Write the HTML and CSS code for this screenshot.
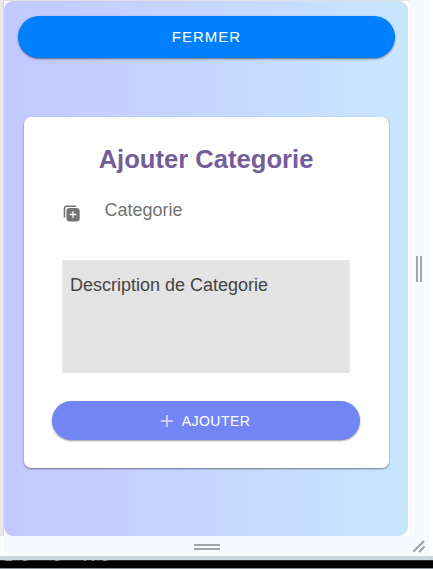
FILE: index.html
```
<!DOCTYPE html>
<html lang="fr">
<head>
<meta charset="utf-8">
<title>Ajouter Categorie</title>
<link rel="stylesheet" href="styles.css">
</head>
<body>
<div class="workspace">
  <div class="gutter"></div>
  <div class="viewport">
    <main class="page">
      <button class="button close">FERMER</button>
      <form class="card">
        <h1>Ajouter Categorie</h1>
        <div class="field">
          <svg class="field-icon" viewBox="0 0 17 17" width="17" height="17">
            <path d="M1.500 12.500V3.500Q1.500 1.300 3.700 1.300H13" fill="none" stroke="#737373" stroke-width="1.600"/>
            <rect x="3.500" y="3" width="13.200" height="13.500" rx="3" fill="#737373"/>
            <path d="M10 6.300v6.400M6.800 9.500h6.400" stroke="#fff" stroke-width="1.300"/>
          </svg>
          <span class="field-label">Categorie</span>
        </div>
        <div class="description">Description de Categorie</div>
        <button class="button add" type="button">
          <svg viewBox="0 0 12 12" width="12" height="12"><path d="M6 0v12M0 6h12" stroke="#dce0ff" stroke-width="1.600"/></svg>
          <span>AJOUTER</span>
        </button>
      </form>
    </main>
  </div>
  <div class="side-handle"><span class="grip vertical"></span></div>
  <div class="edge"></div>
  <div class="bottom-handle">
    <span class="grip horizontal"></span>
    <svg class="corner" viewBox="0 0 14 14" width="14" height="14"><path d="M1.500 11.500L12 1M7 12L12.500 6.500" stroke="#a0a0a0" stroke-width="2"/></svg>
  </div>
  <div class="divider"></div>
  <div class="console">
    <svg viewBox="0 0 120 1" width="120" height="1"><path d="M5 .5h7M23 .5h4M55 .5h4M84 .5h2M92 .5h2M103 .5h4" stroke="#8f9499"/></svg>
  </div>
</div>
</body>
</html>
```
FILE: styles.css
```
* { box-sizing: border-box; }
body {
  margin: 0;
  background: #fff;
  font-family: "Liberation Sans", Arial, sans-serif;
  overflow: hidden;
}
.workspace {
  display: grid;
  width: 433px;
  height: 569px;
  grid-template-columns: 4px 405px 20px 4px;
  grid-template-rows: 536px 20px 4px 9px;
  background: #f6f9fe;
}
.gutter {
  background: #e9e9e9;
  border-right: 1px solid #d9d9d9;
}
.viewport {
  background: #fff;
  border-top: 1px solid #e0e0e0;
}
.page {
  width: 404px;
  height: 534.500px;
  padding: 15px 13px 0 13.500px;
  border-radius: 9px;
  background: linear-gradient(90deg, #c2c8ff, #c9e6ff);
}
.button {
  display: flex;
  align-items: center;
  justify-content: center;
  border: 0;
  padding: 0;
  color: #fff;
  font-family: inherit;
}
.close {
  width: 377px;
  height: 42px;
  padding: 0 0 2px 1px;
  border-radius: 21px;
  background: #0080ff;
  font-size: 15px;
  letter-spacing: 1px;
  box-shadow: 0 1px 2px rgba(0, 0, 0, .5);
}
.card {
  width: 365px;
  height: 351px;
  margin: 59.300px 0 0 6px;
  padding: 24.700px 28px 0;
  border-radius: 7px;
  background: #fff;
  box-shadow: 0 1px 2px rgba(0, 0, 0, .45);
}
h1 {
  margin: 0;
  height: 34px;
  line-height: 34px;
  text-align: center;
  color: #755d99;
  font-size: 25.600px;
}
.field {
  display: flex;
  height: 34px;
  margin: 17px 0 0 11px;
}
.field-icon { margin-top: 12px; }
.field-label {
  margin-left: 25px;
  line-height: 34px;
  font-size: 18px;
  color: #737373;
}
.description {
  width: 288px;
  height: 113px;
  margin: 33px 0 0 10.500px;
  padding: 14px 7px;
  border: 1px solid #e9e9e9;
  border-width: 1px 1px 0 1px;
  background: #e3e3e3;
  color: #444;
  font-size: 18px;
  line-height: 20px;
}
.add {
  width: 308px;
  height: 39px;
  margin-top: 28.500px;
  gap: 9px;
  border-radius: 20px;
  background: #7185f5;
  font-size: 14px;
  letter-spacing: .45px;
  box-shadow: 0 1px 2px rgba(0, 0, 0, .4);
}
.side-handle {
  display: flex;
  align-items: center;
  justify-content: center;
  padding-top: 2px;
}
.grip { border: 0 solid #a3a3a3; }
.vertical {
  width: 6px;
  height: 26px;
  border-width: 0 2px;
}
.edge { background: #fff; grid-row: 1 / 3; grid-column: 4; }
.bottom-handle {
  grid-column: 1 / 4;
  grid-row: 2;
  display: flex;
  align-items: flex-start;
  border-left: 4px solid #fff;
}
.horizontal {
  width: 26px;
  height: 6px;
  margin: 8px 0 0 190px;
  border-width: 2px 0;
}
.corner { margin: 4px 0 0 192px; }
.divider { grid-column: 1 / 5; background: #c7d8df; }
.console {
  grid-column: 1 / 5;
  display: flex;
  align-items: flex-start;
  border-bottom: 1px solid #8a8f93;
  background: linear-gradient(#303234 1px, #000 1px);
}
```
